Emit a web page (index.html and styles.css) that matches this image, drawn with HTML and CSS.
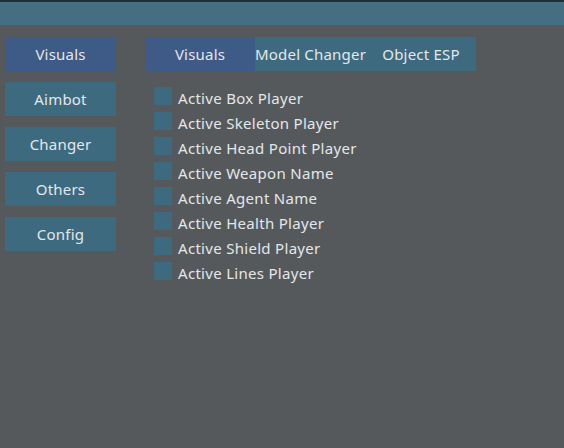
FILE: index.html
```html
<!DOCTYPE html>
<html lang="en">
<head>
  <meta charset="UTF-8">
  <meta name="viewport" content="width=device-width, initial-scale=1.0">
  <link rel="stylesheet" href="styles.css">
</head>
<body>
  <div class="titlebar"></div>
  <div class="menu">
    <div class="sidebar">
      <button class="side-btn active">Visuals</button>
      <button class="side-btn">Aimbot</button>
      <button class="side-btn">Changer</button>
      <button class="side-btn">Others</button>
      <button class="side-btn">Config</button>
    </div>
    <div class="content">
      <div class="tabs">
        <button class="tab active">Visuals</button>
        <button class="tab wide">Model Changer</button>
        <button class="tab">Object ESP</button>
      </div>
      <div class="options">
        <label class="option"><span class="box"></span>Active Box Player</label>
        <label class="option"><span class="box"></span>Active Skeleton Player</label>
        <label class="option"><span class="box"></span>Active Head Point Player</label>
        <label class="option"><span class="box"></span>Active Weapon Name</label>
        <label class="option"><span class="box"></span>Active Agent Name</label>
        <label class="option"><span class="box"></span>Active Health Player</label>
        <label class="option"><span class="box"></span>Active Shield Player</label>
        <label class="option"><span class="box"></span>Active Lines Player</label>
      </div>
    </div>
  </div>
</body>
</html>
```

FILE: styles.css
```css
body {
  margin: 0;
  height: 448px;
  background-color: #56595c;
  font-family: "Noto Sans", sans-serif;
  color: #e3e7ea;
}
.titlebar {
  height: 23px;
  border-top: 2px solid #1f2e38;
  background-color: #446f83;
}
.menu {
  display: flex;
  padding: 12px 0 0 5px;
}
.sidebar {
  display: flex;
  flex-direction: column;
  gap: 11px;
  width: 111px;
}
.side-btn, .tab {
  height: 34px;
  border: none;
  padding: 0;
  background-color: #3e6a80;
  color: #e3e7ea;
  font-family: inherit;
  font-size: 15px;
  letter-spacing: 0.2px;
  white-space: nowrap;
}
.side-btn.active, .tab.active {
  background-color: #3e5a86;
}
.content {
  margin-left: 29px;
}
.tabs {
  display: flex;
}
.tab {
  width: 110px;
}
.tab.wide {
  width: 111px;
}
.options {
  display: flex;
  flex-direction: column;
  padding: 14px 0 0 9px;
}
.option {
  display: flex;
  align-items: center;
  gap: 6px;
  height: 25px;
  font-size: 15px;
  letter-spacing: 0.3px;
}
.box {
  width: 18px;
  height: 18px;
  margin-top: -4px;
  background-color: #3e6a80;
}
```
